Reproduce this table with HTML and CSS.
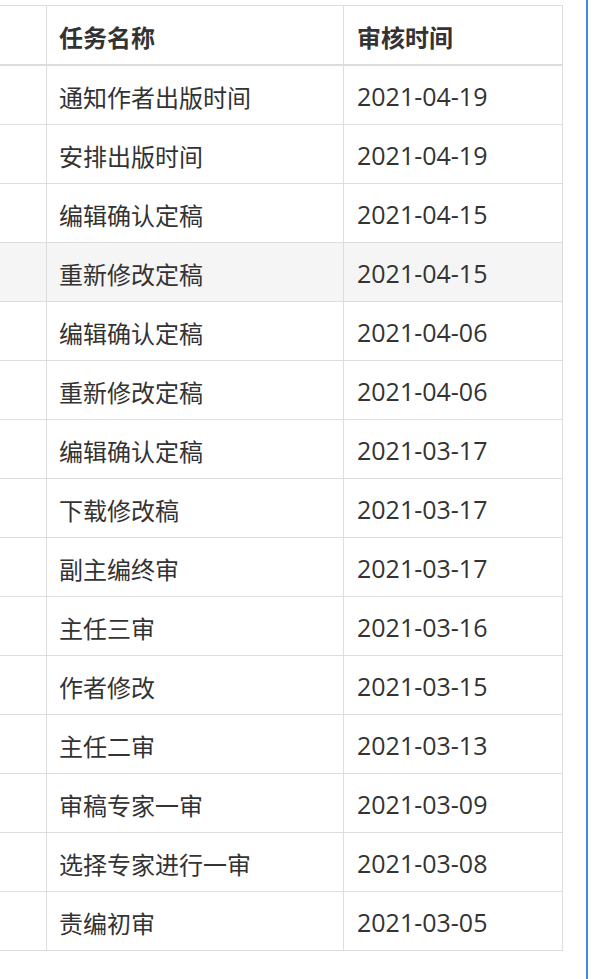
FILE: index.html
```html
<!DOCTYPE html>
<html lang="zh">
<head>
<meta charset="utf-8">
<link rel="stylesheet" href="styles.css">
</head>
<body>
<div class="panel">
  <table class="grid">
    <thead>
      <tr><th class="c0"></th><th class="c1">任务名称</th><th class="c2">审核时间</th></tr>
    </thead>
    <tbody>
      <tr><td class="c0"></td><td>通知作者出版时间</td><td class="d">2021-04-19</td></tr>
      <tr><td class="c0"></td><td>安排出版时间</td><td class="d">2021-04-19</td></tr>
      <tr><td class="c0"></td><td>编辑确认定稿</td><td class="d">2021-04-15</td></tr>
      <tr class="hover"><td class="c0"></td><td>重新修改定稿</td><td class="d">2021-04-15</td></tr>
      <tr><td class="c0"></td><td>编辑确认定稿</td><td class="d">2021-04-06</td></tr>
      <tr><td class="c0"></td><td>重新修改定稿</td><td class="d">2021-04-06</td></tr>
      <tr><td class="c0"></td><td>编辑确认定稿</td><td class="d">2021-03-17</td></tr>
      <tr><td class="c0"></td><td>下载修改稿</td><td class="d">2021-03-17</td></tr>
      <tr><td class="c0"></td><td>副主编终审</td><td class="d">2021-03-17</td></tr>
      <tr><td class="c0"></td><td>主任三审</td><td class="d">2021-03-16</td></tr>
      <tr><td class="c0"></td><td>作者修改</td><td class="d">2021-03-15</td></tr>
      <tr><td class="c0"></td><td>主任二审</td><td class="d">2021-03-13</td></tr>
      <tr><td class="c0"></td><td>审稿专家一审</td><td class="d">2021-03-09</td></tr>
      <tr><td class="c0"></td><td>选择专家进行一审</td><td class="d">2021-03-08</td></tr>
      <tr><td class="c0"></td><td>责编初审</td><td class="d">2021-03-05</td></tr>
    </tbody>
  </table>
</div>
</body>
</html>
```
FILE: styles.css
```css
html, body {
  margin: 0;
  padding: 0;
  background: #fff;
}
body {
  font-family: "Open Sans", "Noto Sans CJK SC", sans-serif;
  color: #333;
  overflow: hidden;
}
.panel {
  width: 588px;
  height: 979px;
  border-right: 2px solid #3a8ee6;
  padding-top: 5px;
  box-sizing: border-box;
  overflow: hidden;
}
.grid {
  border-collapse: separate;
  border-spacing: 0;
  border-top: 1px solid #ddd;
  margin-left: -54px;
  font-size: 24px;
}
.grid th, .grid td {
  border-right: 1px solid #ddd;
  border-bottom: 1px solid #ddd;
  height: 59px;
  padding: 2px 12px 0;
  text-align: left;
  vertical-align: middle;
  box-sizing: border-box;
  white-space: nowrap;
}
.grid th {
  font-weight: bold;
  border-bottom: 2px solid #ddd;
  height: 60px;
}
.grid .c0 { width: 101px; padding: 0; }
.grid .c1 { width: 297px; }
.grid .c2 { width: 219px; padding-left: 13px; }
.grid td.d { padding-left: 13px; font-size: 25px; }
.grid tr.hover td { background: #f5f5f5; }
```
